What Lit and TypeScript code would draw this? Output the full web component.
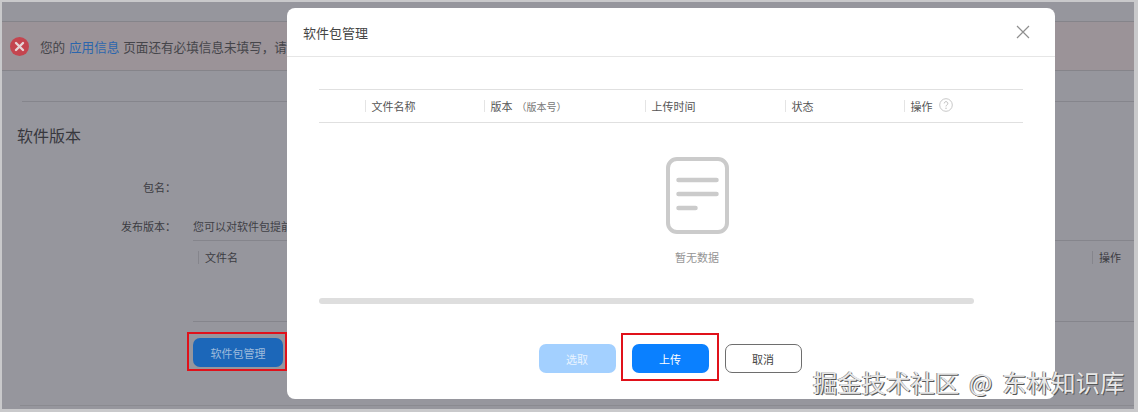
import { LitElement, html, css } from "lit";
import { customElement } from "lit/decorators.js";

const cols = [
  { w: 46, t: "" },
  { w: 119, t: "文件名称" },
  { w: 161, t: "版本" },
  { w: 140, t: "上传时间" },
  { w: 119, t: "状态" },
  { w: 119, t: "操作" },
];

@customElement("app-root")
export class AppRoot extends LitElement {
  static styles = css`
    :host { display: block; width: 1138px; height: 412px; overflow: hidden; position: relative;
      font-family: "Noto Sans CJK SC", "Liberation Sans", sans-serif; }
    .frame { width: 1138px; height: 412px; box-sizing: border-box; padding: 2px 4px 3px 2px; background: #c9c9cb; }
    .page { height: 100%; box-sizing: border-box; background: #96969d; padding-top: 19px; color: #2b2b30; display: flex; flex-direction: column; }
    .alert { height: 50px; box-sizing: border-box; background: #9b9398; border-top: 1px solid #85848a; border-bottom: 1px solid #85848a;
      display: flex; align-items: center; gap: 11px; padding-left: 8px; font-size: 12.6px; white-space: nowrap; overflow: hidden; color: #45454a; flex: none; word-spacing: 1px; }
    .alert svg { flex: none; }
    .link { color: #2b66ad; }
    .rule { height: 1px; background: #85858c; margin: 30px 0 0 20px; flex: none; }
    h2 { margin: 22px 0 0 15px; font-size: 16px; line-height: 22px; font-weight: 400; color: #38383d; flex: none; }
    .form { display: grid; grid-template-columns: 174px 1fr; column-gap: 17px; align-content: start; margin-top: 33px; font-size: 11px; flex: 1; }
    .lab { text-align: right; line-height: 16px; color: #3c3c42; }
    .r2 { margin-top: 23px; }
    .val { line-height: 16px; color: #404046; white-space: nowrap; overflow: hidden; }
    .tb { grid-column: 2; margin-top: 6px; height: 82px; box-sizing: border-box; border-top: 1px solid #85858c; border-bottom: 1px solid #85858c; }
    .th { display: flex; justify-content: space-between; align-items: center; height: 32px; padding-left: 5px; padding-right: 13px; font-size: 11px; color: #3c3c42; }
    .th span { border-left: 1px solid #85858c; padding-left: 6px; line-height: 13px; }
    .mgr { grid-column: 2; margin-top: 16px; width: 90px; height: 29px; border: none; border-radius: 7px; background: #1c67b9; color: #9dbbdc;
      font: inherit; font-size: 11px; padding: 0; }
    .mark { position: absolute; border: 2px solid #e0111a; box-sizing: border-box; pointer-events: none; }
    .m1 { left: 187px; top: 332px; width: 100px; height: 39px; }
    .m2 { left: 621px; top: 333px; width: 98px; height: 48px; }
    .foot { height: 1px; background: #8a8a90; margin: 0 0 3px 18px; flex: none; }
    .modal { position: absolute; left: 287px; top: 8px; width: 768px; height: 391px; background: #fff; border-radius: 8px; display: flex; flex-direction: column; }
    .head { height: 49px; box-sizing: border-box; flex: none; border-bottom: 1px solid #e6e6e6; display: flex; align-items: center; justify-content: space-between;
      padding: 0 25px 0 16px; font-size: 13px; color: #444; }
    .body { padding: 32px 32px 0; flex: 1; display: flex; flex-direction: column; align-items: stretch; }
    .thead { width: 704px; height: 34px; box-sizing: border-box; border-top: 1px solid #e0e0e0; border-bottom: 1px solid #e0e0e0; display: flex; align-items: center; font-size: 11px; color: #555; }
    .c { box-sizing: border-box; display: flex; align-items: center; gap: 6px; height: 12px; border-left: 1px solid #e4e4e4; padding-left: 5.5px; white-space: nowrap; }
    .c:first-child { border-left: none; }
    .c svg { margin-bottom: 2px; }
    .sub { font-size: 10px; color: #777; margin-left: -2px; }
    .empty { display: flex; flex-direction: column; align-items: center; margin-top: 34px; margin-left: 52px; font-size: 11px; color: #949494; gap: 15px; }
    .empty span { line-height: 16px; }
    .scroll { width: 655px; height: 6px; border-radius: 3px; background: #dedede; margin-top: 33px; flex: none; }
    .foot-btns { display: flex; justify-content: center; gap: 16px; margin-top: 40px; padding-right: 2px; }
    .btn { width: 77px; height: 29px; box-sizing: border-box; border-radius: 7px; border: none; font: inherit; font-size: 11px; padding: 0; }
    .pale { background: #a3d0ff; color: #e9f4ff; }
    .pri { background: #0a80ff; color: #fff; }
    .gh { background: #fff; border: 1px solid #6e6e6e; color: #444; }
    .wm { position: absolute; left: 813px; top: 367px; font-size: 24.4px; line-height: 30px; color: #e8e8e8; white-space: nowrap; word-spacing: 4.5px;
      text-shadow: 1px 1px 0 #555, -1px 0 0 #8a8a8a; font-weight: 400; }
  `;

  render() {
    return html`
      <div class="frame">
        <div class="page">
          <div class="alert">
            <svg width="19" height="19" viewBox="0 0 19 19"><circle cx="9.5" cy="9.5" r="9.5" fill="#c4454f"/><path d="M6 6l7 7M13 6l-7 7" stroke="#e6d5d7" stroke-width="2.4" stroke-linecap="round"/></svg>
            <div>您的 <span class="link">应用信息</span> 页面还有必填信息未填写，请</div>
          </div>
          <div class="rule"></div>
          <h2>软件版本</h2>
          <div class="form">
            <div class="lab">包名：</div><div></div>
            <div class="lab r2">发布版本：</div>
            <div class="val r2">您可以对软件包提前</div>
            <div class="tb">
              <div class="th"><span>文件名</span><span>操作</span></div>
            </div>
            <button class="mgr">软件包管理</button>
          </div>
          <div class="foot"></div>
        </div>
      </div>
      <div class="mark m1"></div>
      <div class="modal">
        <div class="head">
          <span>软件包管理</span>
          <svg width="14" height="14" viewBox="0 0 14 14"><path d="M1 1l12 12M13 1L1 13" stroke="#8f8f8f" stroke-width="1.2" fill="none"/></svg>
        </div>
        <div class="body">
          <div class="thead">
            ${cols.map((c) => html`
              <div class="c" style="width:${c.w}px">
                ${c.t}
                ${c.t === "版本" ? html`<span class="sub">（版本号）</span>` : ""}
                ${c.t === "操作" ? html`<svg width="14" height="14" viewBox="0 0 14 14"><circle cx="7" cy="7" r="6.3" fill="none" stroke="#c8c8c8"/><path d="M5.2 5.4a1.8 1.8 0 1 1 2.7 1.6c-.6.4-.9.7-.9 1.4" fill="none" stroke="#bdbdbd"/><circle cx="7" cy="10.2" r=".7" fill="#bdbdbd"/></svg>` : ""}
              </div>`)}
          </div>
          <div class="empty">
            <svg width="63" height="77" viewBox="0 0 63 77">
              <rect x="2" y="2" width="59" height="73" rx="9" fill="none" stroke="#cbcbcb" stroke-width="4"/>
              <path d="M12.5 23h38M12.5 37h38M12.5 51h17" stroke="#cbcbcb" stroke-width="4.5" stroke-linecap="round" fill="none"/>
            </svg>
            <span>暂无数据</span>
          </div>
          <div class="scroll"></div>
          <div class="foot-btns">
            <button class="btn pale">选取</button>
            <button class="btn pri">上传</button>
            <button class="btn gh">取消</button>
          </div>
        </div>
      </div>
      <div class="mark m2"></div>
      <div class="wm">掘金技术社区 @ 东林知识库</div>
    `;
  }
}
